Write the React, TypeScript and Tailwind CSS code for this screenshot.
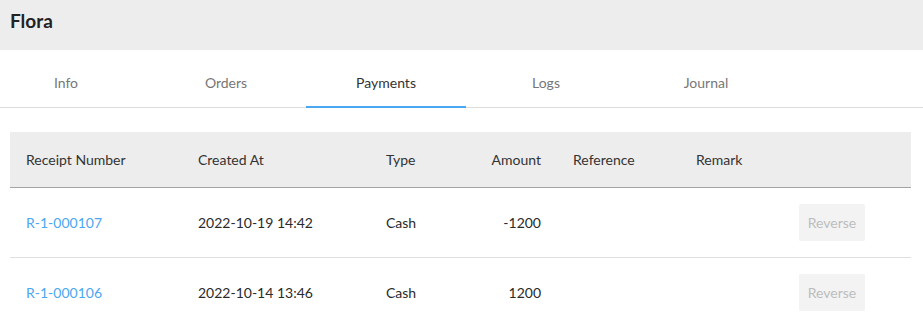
import React from "react";

const tabs = ["Info", "Orders", "Payments", "Logs", "Journal"];

const payments = [
  { number: "R-1-000107", createdAt: "2022-10-19 14:42", type: "Cash", amount: "-1200" },
  { number: "R-1-000106", createdAt: "2022-10-14 13:46", type: "Cash", amount: "1200" },
];

const cols = "grid grid-cols-[172px_188px_87px_100px_123px_119px_1fr] items-center";

export default function App() {
  return (
    <div className="min-h-screen bg-white font-['Lato','Liberation_Sans',sans-serif] text-[14px] text-[#2a2a2a]">
      <div className="h-[50px] bg-[#ededed] px-[10px] flex items-start pt-[7px]">
        <h1 className="text-[19px] font-bold text-[#222]">Flora</h1>
      </div>

      <div className="h-[58px] border-b border-[#dcdcdc] flex -ml-[14px]">
        {tabs.map((tab) => (
          <div
            key={tab}
            className={
              tab === "Payments"
                ? "w-[160px] flex items-center justify-center pt-[8px] text-[#333] border-b-2 border-[#4ba7f0] -mb-px"
                : "w-[160px] flex items-center justify-center pt-[8px] text-[#777]"
            }
          >
            {tab}
          </div>
        ))}
      </div>

      <div className="pl-[10px] pr-[12px] pt-[24px]">
        <div className={`${cols} h-[56px] bg-[#ededed] border-b border-[#a3a3a3] text-[#333]`}>
          <div className="pl-4">Receipt Number</div>
          <div className="pl-4">Created At</div>
          <div className="pl-4">Type</div>
          <div className="pr-4 text-right">Amount</div>
          <div className="pl-4">Reference</div>
          <div className="pl-4">Remark</div>
          <div />
        </div>
        {payments.map((p) => (
          <div key={p.number} className={`${cols} h-[70px] border-b border-[#e0e0e0]`}>
            <div className="pl-4 text-[#4ba7f0]">{p.number}</div>
            <div className="pl-4">{p.createdAt}</div>
            <div className="pl-4">{p.type}</div>
            <div className="pr-4 text-right">{p.amount}</div>
            <div />
            <div />
            <div>
              <button className="h-[37px] w-[66px] rounded-[2px] bg-[#f3f3f3] text-[#bdbdbd] text-[14px]">
                Reverse
              </button>
            </div>
          </div>
        ))}
      </div>
    </div>
  );
}
